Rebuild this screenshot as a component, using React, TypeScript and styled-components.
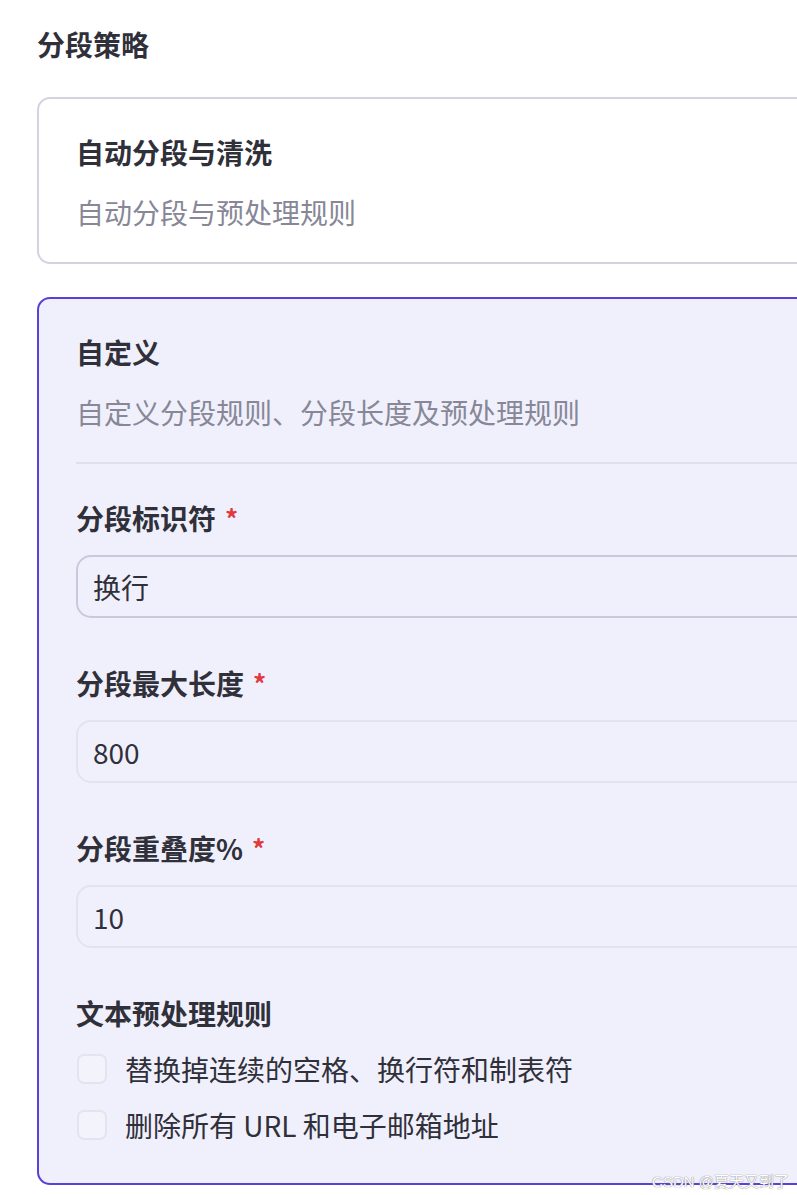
import styled, { createGlobalStyle } from 'styled-components';

const GlobalStyle = createGlobalStyle`
  html, body {
    margin: 0;
    padding: 0;
    background: #ffffff;
    overflow: hidden;
  }
  body {
    font-family: "Noto Sans CJK SC", "Noto Sans", sans-serif;
    color: #30303a;
  }
`;

const Page = styled.div`
  position: relative;
  width: 797px;
  height: 1195px;
  overflow: hidden;
  padding: 24px 0 0 37px;
  box-sizing: border-box;
`;

const SectionTitle = styled.div`
  font-size: 28px;
  line-height: 40px;
  font-weight: 700;
`;

const CardList = styled.div`
  display: flex;
  flex-direction: column;
  gap: 33px;
  margin-top: 33px;
  width: 1000px;
`;

const Card = styled.div<{ $active?: boolean }>`
  border: 2px solid ${(p) => (p.$active ? '#5a3fd8' : '#d2d4e0')};
  background: ${(p) => (p.$active ? '#f0f0fc' : '#ffffff')};
  border-radius: 13px;
  padding: 33px 37px ${(p) => (p.$active ? '38px' : '30px')};
  display: flex;
  flex-direction: column;
`;

const CardTitle = styled.div`
  font-size: 28px;
  line-height: 40px;
  font-weight: 700;
`;

const CardDesc = styled.div`
  font-size: 28px;
  line-height: 40px;
  color: #878797;
  margin-top: 20px;
`;

const Divider = styled.div`
  height: 2px;
  background: #dfe0e9;
  margin: 30px 0 34px;
`;

const Field = styled.div`
  display: flex;
  flex-direction: column;
  gap: 17px;
  margin-bottom: 45px;
`;

const Label = styled.div`
  font-size: 28px;
  line-height: 40px;
  font-weight: 700;
  display: flex;
  align-items: center;
`;

const Required = styled.span`
  color: #e03a3e;
  margin-left: 9px;
  font-size: 26px;
  font-weight: 700;
`;

const InputBox = styled.div<{ $strong?: boolean }>`
  height: 63px;
  box-sizing: border-box;
  border: 2px solid ${(p) => (p.$strong ? '#c8cadc' : '#e2e3ee')};
  border-radius: 15px;
  padding: 0 15px;
  display: flex;
  align-items: center;
  font-size: 28px;
  color: #30303a;
`;

const RuleList = styled.div`
  display: flex;
  flex-direction: column;
  gap: 16px;
  margin-top: 16px;
`;

const CheckRow = styled.label`
  display: flex;
  align-items: center;
  height: 40px;
  font-size: 28px;
  color: #30303a;
  padding-left: 1px;
`;

const CheckBox = styled.span`
  width: 30px;
  height: 30px;
  box-sizing: border-box;
  border: 2px solid #e2e3ee;
  border-radius: 7px;
  background: #f3f3fc;
  margin-right: 18px;
  flex-shrink: 0;
`;

const Watermark = styled.div`
  position: absolute;
  right: 8px;
  bottom: 4px;
  font-size: 15px;
  color: #ffffff;
  text-shadow: 0 0 1px #8a8a8a, 0 0 1px #8a8a8a;
  font-family: "Liberation Sans", "Noto Sans CJK SC", sans-serif;
`;

const fields = [
  { label: '分段标识符', value: '换行', strong: true },
  { label: '分段最大长度', value: '800' },
  { label: '分段重叠度%', value: '10' },
];

const rules = ['替换掉连续的空格、换行符和制表符', '删除所有 URL 和电子邮箱地址'];

export default function App() {
  return (
    <Page>
      <GlobalStyle />
      <SectionTitle>分段策略</SectionTitle>
      <CardList>
        <Card>
          <CardTitle>自动分段与清洗</CardTitle>
          <CardDesc>自动分段与预处理规则</CardDesc>
        </Card>
        <Card $active>
          <CardTitle>自定义</CardTitle>
          <CardDesc>自定义分段规则、分段长度及预处理规则</CardDesc>
          <Divider />
          {fields.map((f) => (
            <Field key={f.label}>
              <Label>
                {f.label}
                <Required>*</Required>
              </Label>
              <InputBox $strong={f.strong}>{f.value}</InputBox>
            </Field>
          ))}
          <Label>文本预处理规则</Label>
          <RuleList>
            {rules.map((r) => (
              <CheckRow key={r}>
                <CheckBox />
                {r}
              </CheckRow>
            ))}
          </RuleList>
        </Card>
      </CardList>
      <Watermark>CSDN @夏天又到了</Watermark>
    </Page>
  );
}
